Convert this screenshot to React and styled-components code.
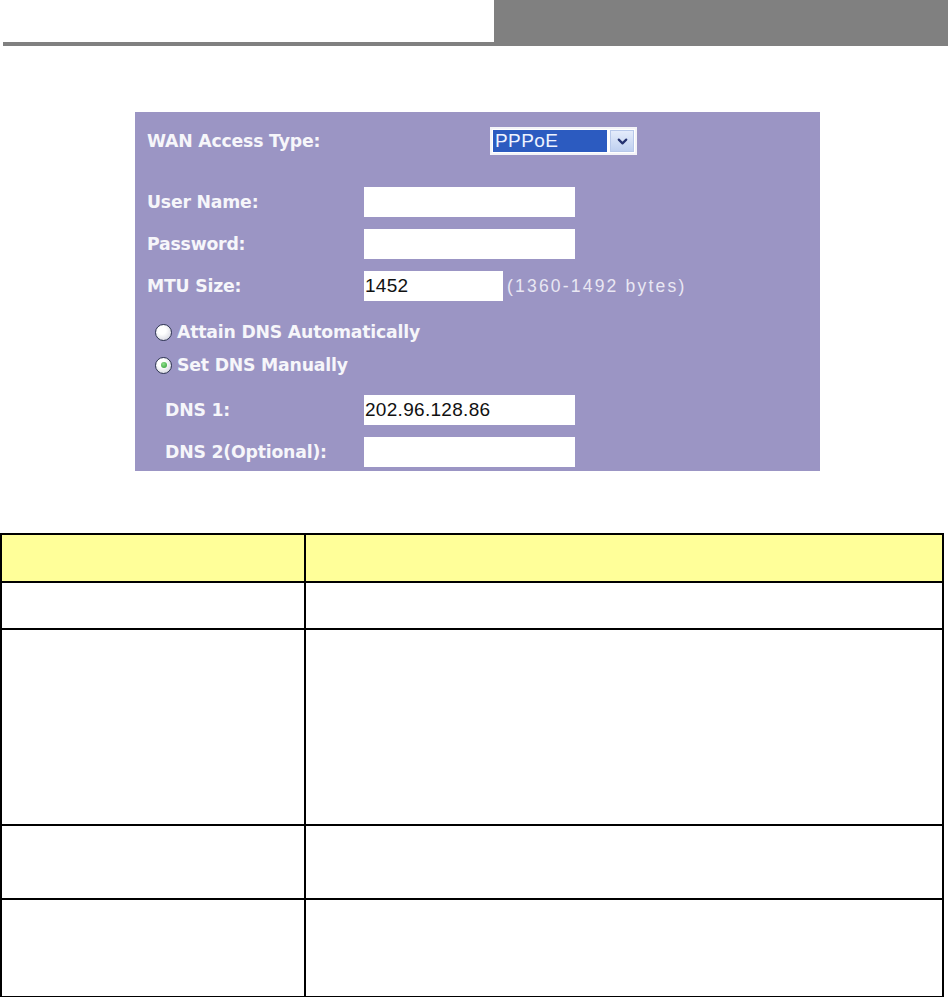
import React from "react";
import styled, { createGlobalStyle } from "styled-components";
import { ChevronDown } from "lucide-react";

const GlobalStyle = createGlobalStyle`
  html, body {
    margin: 0;
    padding: 0;
    background: #ffffff;
    font-family: "Liberation Sans", Arial, sans-serif;
  }
`;

const Page = styled.div`
  width: 948px;
  height: 997px;
  overflow: hidden;
  background: #fff;
`;

const Header = styled.div`
  display: flex;
  height: 46px;
`;

const HeaderLeft = styled.div`
  width: 491px;
  padding-left: 3px;
  display: flex;
  align-items: flex-end;
`;

const HeaderRule = styled.div`
  width: 100%;
  height: 4px;
  background: #808080;
`;

const HeaderBlock = styled.div`
  flex: 1;
  background: #808080;
`;

const Panel = styled.div`
  margin: 66px 0 0 135px;
  width: 685px;
  height: 359px;
  box-sizing: border-box;
  padding: 15px 0 4px 12px;
  background: #9b95c4;
  display: flex;
  flex-direction: column;
`;

const Row = styled.div`
  display: flex;
  align-items: center;
  height: ${({ $h }) => $h || 30}px;
  margin-top: ${({ $top }) => $top || 0}px;
  padding-left: ${({ $indent }) => $indent || 0}px;
`;

const Label = styled.div`
  width: ${({ $w }) => $w}px;
  flex-shrink: 0;
  font-family: "DejaVu Sans", Verdana, sans-serif;
  font-weight: bold;
  font-size: 17.3px;
  letter-spacing: -0.2px;
  color: #f6f6fa;
`;

const TextInput = styled.div`
  width: ${({ $w }) => $w || 211}px;
  height: 30px;
  box-sizing: border-box;
  background: #fff;
  padding-left: 1px;
  display: flex;
  align-items: center;
  font-family: "Liberation Sans", Arial, sans-serif;
  font-size: 19px;
  letter-spacing: 0.3px;
  color: #111;
`;

const Hint = styled.span`
  margin-left: 4px;
  font-family: "Liberation Sans", Arial, sans-serif;
  font-size: 17.5px;
  letter-spacing: 2.2px;
  color: #e9e7f3;
`;

const SelectBox = styled.div`
  width: 147px;
  height: 28px;
  box-sizing: border-box;
  border: 2px solid #f4f4f8;
  background: #fff;
  padding: 1px;
  display: flex;
  gap: 3px;
`;

const SelectValue = styled.div`
  flex: 1;
  background: #2c5bc0;
  color: #eef3ff;
  display: flex;
  align-items: center;
  padding-left: 2px;
  font-family: "Liberation Sans", Arial, sans-serif;
  font-size: 19px;
  letter-spacing: 0.4px;
`;

const SelectButton = styled.div`
  width: 24px;
  box-sizing: border-box;
  border: 1px solid #b7c8ea;
  background: linear-gradient(#e4ecfb, #bfd0f0);
  display: flex;
  align-items: center;
  justify-content: center;
  color: #243270;
`;

const RadioRow = styled(Row)`
  padding-left: 8px;
`;

const Radio = styled.span`
  width: 17px;
  height: 17px;
  box-sizing: border-box;
  border-radius: 50%;
  border: 1.5px solid #2d3450;
  background: radial-gradient(circle at 40% 35%, #ffffff 30%, #c9cad8 100%);
  display: flex;
  align-items: center;
  justify-content: center;
  margin-right: 5px;
  flex-shrink: 0;

  &::after {
    content: "";
    width: 6px;
    height: 6px;
    border-radius: 50%;
    background: ${({ $checked }) => ($checked ? "radial-gradient(circle at 40% 35%, #8ee08a, #2f9a34)" : "transparent")};
  }
`;

const Table = styled.table`
  margin-top: 62px;
  width: 944px;
  border-collapse: collapse;
  table-layout: fixed;
`;

const Tr = styled.tr`
  height: ${({ $h }) => $h}px;
  background: ${({ $head }) => ($head ? "#ffff99" : "#fff")};
`;

const Td = styled.td`
  border: 2px solid #000;
  padding: 0;
  width: ${({ $w }) => ($w ? `${$w}px` : "auto")};
`;

const rows = [47, 196, 74, 98];

export default function App() {
  return (
    <Page>
      <GlobalStyle />
      <Header>
        <HeaderLeft>
          <HeaderRule />
        </HeaderLeft>
        <HeaderBlock />
      </Header>

      <Panel>
        <Row $h={28}>
          <Label $w={343}>WAN Access Type:</Label>
          <SelectBox>
            <SelectValue>PPPoE</SelectValue>
            <SelectButton>
              <ChevronDown size={15} strokeWidth={3.5} />
            </SelectButton>
          </SelectBox>
        </Row>
        <Row $top={32}>
          <Label $w={217}>User Name:</Label>
          <TextInput />
        </Row>
        <Row $top={12}>
          <Label $w={217}>Password:</Label>
          <TextInput />
        </Row>
        <Row $top={12}>
          <Label $w={217}>MTU Size:</Label>
          <TextInput $w={139}>1452</TextInput>
          <Hint>(1360-1492 bytes)</Hint>
        </Row>
        <RadioRow $h={20} $top={21}>
          <Radio />
          <Label>Attain DNS Automatically</Label>
        </RadioRow>
        <RadioRow $h={20} $top={13}>
          <Radio $checked />
          <Label>Set DNS Manually</Label>
        </RadioRow>
        <Row $top={20} $indent={18}>
          <Label $w={199}>DNS 1:</Label>
          <TextInput>202.96.128.86</TextInput>
        </Row>
        <Row $top={12} $indent={18}>
          <Label $w={199}>DNS 2(Optional):</Label>
          <TextInput />
        </Row>
      </Panel>

      <Table>
        <tbody>
          <Tr $h={48} $head>
            <Td $w={302} />
            <Td />
          </Tr>
          {rows.map((h, i) => (
            <Tr key={i} $h={h}>
              <Td />
              <Td />
            </Tr>
          ))}
        </tbody>
      </Table>
    </Page>
  );
}
